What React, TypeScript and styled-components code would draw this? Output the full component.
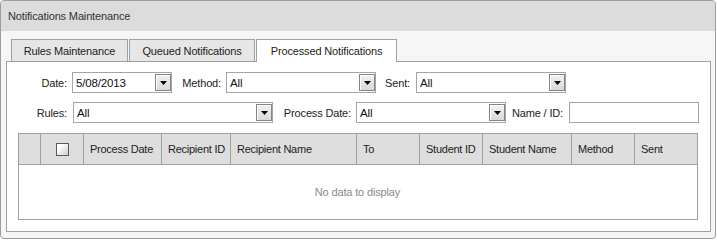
import React from "react";
import styled, { createGlobalStyle } from "styled-components";

const Global = createGlobalStyle`
  html, body { margin: 0; padding: 0; background: #ffffff; }
  body {
    font-family: "Liberation Sans", Arial, sans-serif;
    font-size: 11px;
    letter-spacing: -0.15px;
    color: #222;
  }
  * { box-sizing: border-box; }
`;

const Window = styled.div`
  width: 716px;
  height: 239px;
  border: 1px solid #9c9c9c;
  border-radius: 4px;
  background: #f6f6f6;
  display: flex;
  flex-direction: column;
  overflow: hidden;
`;

const Header = styled.div`
  height: 30px;
  flex: none;
  background: #dcdcdc;
  display: flex;
  align-items: center;
  padding-left: 7px;
  color: #333;
`;

const Body = styled.div`
  flex: 1;
  padding: 8px 4px 6px 5px;
  display: flex;
  flex-direction: column;
`;

const TabStrip = styled.div`
  height: 22px;
  flex: none;
  display: flex;
  align-items: flex-end;
  padding-left: 5px;
`;

const Tab = styled.div<{ $w: number; $active?: boolean }>`
  width: ${(p) => p.$w}px;
  height: ${(p) => (p.$active ? 23 : 22)}px;
  margin-bottom: ${(p) => (p.$active ? -1 : 0)}px;
  margin-right: 1px;
  border: 1px solid #a0a0a0;
  border-bottom: none;
  background: ${(p) => (p.$active ? "#ffffff" : "#e6e6e6")};
  display: flex;
  align-items: center;
  justify-content: center;
  padding-bottom: ${(p) => (p.$active ? 1 : 0)}px;
  color: #222;
  position: relative;
  z-index: ${(p) => (p.$active ? 1 : 0)};
  white-space: nowrap;
`;

const Content = styled.div`
  height: 171px;
  flex: none;
  border: 1px solid #a0a0a0;
  background: #ffffff;
  padding: 10px 12px 11px 11px;
  display: flex;
  flex-direction: column;
`;

const FilterRow = styled.div<{ $mt?: number }>`
  height: 21px;
  display: flex;
  align-items: center;
  margin-top: ${(p) => p.$mt ?? 0}px;
`;

const Label = styled.label<{ $w: number; $gap: number }>`
  width: ${(p) => p.$w}px;
  padding-right: ${(p) => p.$gap}px;
  text-align: right;
  white-space: nowrap;
  color: #222;
  flex: none;
`;

const Field = styled.div<{ $w: number }>`
  width: ${(p) => p.$w}px;
  height: 21px;
  flex: none;
  border: 1px solid #a5a5a5;
  background: #ffffff;
  display: flex;
  align-items: stretch;
`;

const Value = styled.span`
  flex: 1;
  display: flex;
  align-items: center;
  padding-left: 3px;
  padding-top: 1px;
  font-size: 11.5px;
  color: #111;
  overflow: hidden;
  white-space: nowrap;
`;

const DropButton = styled.div`
  width: 16px;
  margin: 1px 0 1px 0;
  border: 1px solid #858585;
  background: linear-gradient(#f2f2f2, #d9d9d9);
  box-shadow: inset 1px 1px 0 #ffffff;
  display: flex;
  align-items: center;
  justify-content: center;
`;

const Grid = styled.div`
  margin-top: 10px;
  width: 680px;
  height: 87px;
  border: 1px solid #a0a0a0;
  display: flex;
  flex-direction: column;
`;

const cols = "22px 43px 78px 69px 126px 63px 63px 89px 63px 62px";

const HeadRow = styled.div`
  height: 31px;
  flex: none;
  display: grid;
  grid-template-columns: ${cols};
  background: #dedede;
  border-bottom: 1px solid #a0a0a0;
`;

const HeadCell = styled.div<{ $center?: boolean; $last?: boolean }>`
  border-right: ${(p) => (p.$last ? "none" : "1px solid #a0a0a0")};
  display: flex;
  align-items: center;
  justify-content: ${(p) => (p.$center ? "center" : "flex-start")};
  padding-left: ${(p) => (p.$center ? 0 : 6)}px;
  white-space: nowrap;
  overflow: hidden;
  color: #222;
  letter-spacing: -0.25px;
`;

const Check = styled.span`
  width: 13px;
  height: 13px;
  border: 1px solid #5a5a5a;
  background: linear-gradient(135deg, #ffffff 25%, #cfcfcf 100%);
  margin-left: 1px;
`;

const Empty = styled.div`
  flex: 1;
  display: flex;
  align-items: center;
  justify-content: center;
  color: #8a8a8a;
  padding-right: 1px;
`;

const Arrow = () => (
  <svg width="7" height="4" viewBox="0 0 7 4">
    <path d="M0 0 H7 L3.5 4 Z" fill="#000" />
  </svg>
);

const Combo = ({ w, value }: { w: number; value: string }) => (
  <Field $w={w}>
    <Value>{value}</Value>
    <DropButton>
      <Arrow />
    </DropButton>
  </Field>
);

const headers = [
  "Process Date",
  "Recipient ID",
  "Recipient Name",
  "To",
  "Student ID",
  "Student Name",
  "Method",
  "Sent",
];

export default function App() {
  return (
    <>
      <Global />
      <Window>
        <Header>Notifications Maintenance</Header>
        <Body>
          <TabStrip>
            <Tab $w={117}>Rules Maintenance</Tab>
            <Tab $w={126}>Queued Notifications</Tab>
            <Tab $w={141} $active>
              Processed Notifications
            </Tab>
          </TabStrip>
          <Content>
            <FilterRow>
              <Label $w={54} $gap={5}>Date:</Label>
              <Combo w={100} value="5/08/2013" />
              <Label $w={54} $gap={5}>Method:</Label>
              <Combo w={150} value="All" />
              <Label $w={40} $gap={6}>Sent:</Label>
              <Combo w={150} value="All" />
            </FilterRow>
            <FilterRow $mt={9}>
              <Label $w={55} $gap={6}>Rules:</Label>
              <Combo w={200} value="All" />
              <Label $w={83} $gap={5}>Process Date:</Label>
              <Combo w={150} value="All" />
              <Label $w={63} $gap={6}>Name / ID:</Label>
              <Field $w={130} />
            </FilterRow>
            <Grid>
              <HeadRow>
                <HeadCell />
                <HeadCell $center>
                  <Check />
                </HeadCell>
                {headers.map((h, i) => (
                  <HeadCell key={h} $last={i === headers.length - 1}>
                    {h}
                  </HeadCell>
                ))}
              </HeadRow>
              <Empty>No data to display</Empty>
            </Grid>
          </Content>
        </Body>
      </Window>
    </>
  );
}
